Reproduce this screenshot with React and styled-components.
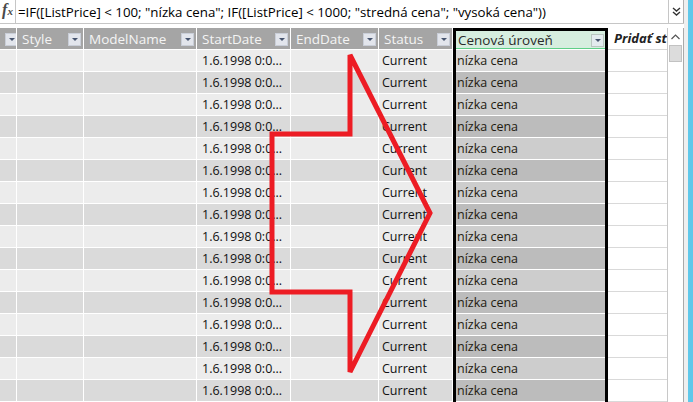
import React from 'react';
import styled, { createGlobalStyle } from 'styled-components';

const GlobalStyle = createGlobalStyle`
  html, body {
    margin: 0;
    padding: 0;
    background: #fff;
    overflow: hidden;
  }
  body {
    font-family: 'Open Sans', 'Noto Sans', sans-serif;
  }
`;

const ROWS = 16;

const columns = [
  { key: 'prev', title: '', width: 17, value: '' },
  { key: 'style', title: 'Style', width: 67, value: '' },
  { key: 'model', title: 'ModelName', width: 113, value: '' },
  { key: 'start', title: 'StartDate', width: 94, value: '1.6.1998 0:0...', pad: 5 },
  { key: 'end', title: 'EndDate', width: 88, value: '' },
  { key: 'status', title: 'Status', width: 74, value: 'Current', pad: 3 },
];

const formula =
  '=IF([ListPrice] < 100; "nízka cena"; IF([ListPrice] < 1000; "stredná cena"; "vysoká cena"))';

const App = () => {
  const rows = Array.from({ length: ROWS }, (_, i) => i);

  return (
    <>
      <GlobalStyle />
      <Page>
        <Main>
          <FormulaBar>
            <FxBox>
              <Fx>f</Fx>
              <FxSub>x</FxSub>
            </FxBox>
            <FormulaText>{formula}</FormulaText>
            <ExpandButton>
              <svg width="9" height="10" viewBox="0 0 9 10">
                <polyline points="1,1 4.5,4 8,1" fill="none" stroke="#333" strokeWidth="1.4" />
                <polyline points="1,5 4.5,8 8,5" fill="none" stroke="#333" strokeWidth="1.4" />
              </svg>
            </ExpandButton>
          </FormulaBar>
          <Gap />
          <Grid>
            {columns.map(col => (
              <Column key={col.key} $width={col.width}>
                <HeaderCell>
                  <HeaderTitle>{col.title}</HeaderTitle>
                  <DropButton />
                </HeaderCell>
                {rows.map(i => (
                  <Cell key={i} $dark={i % 2 === 1} $pad={col.pad}>
                    {col.value}
                  </Cell>
                ))}
              </Column>
            ))}

            <SelectedColumn>
              <SelectedHeader>
                <SelectedTitle>Cenová úroveň</SelectedTitle>
                <DropButton $green />
              </SelectedHeader>
              {rows.map(i => (
                <SelectedCell key={i} $tone={i === 0 ? 'first' : i % 2 === 1 ? 'dark' : 'mid'}>
                  nízka cena
                </SelectedCell>
              ))}
            </SelectedColumn>

            <AddColumn>
              <AddHeader>Pridať st</AddHeader>
              {rows.map(i => (
                <AddCell key={i} />
              ))}
            </AddColumn>

            <ScrollBar>
              <ScrollArrow>
                <svg width="9" height="6" viewBox="0 0 9 6">
                  <polyline points="0.5,5 4.5,1 8.5,5" fill="none" stroke="#555" strokeWidth="1.2" />
                </svg>
              </ScrollArrow>
              <ScrollThumb />
            </ScrollBar>
          </Grid>
        </Main>
        <Edge>
          <EdgeLine />
          <EdgeBlue />
        </Edge>

        <Overlay width="693" height="402" viewBox="0 0 693 402">
          <polygon
            points="350,55 350,134 272,134 272,292 350,292 350,372 430,213"
            fill="none"
            stroke="#ed1c24"
            strokeWidth="5"
            strokeLinejoin="miter"
          />
        </Overlay>
      </Page>
    </>
  );
};

export default App;

const Page = styled.div`
  position: relative;
  display: flex;
  width: 693px;
  height: 402px;
  overflow: hidden;
`;

const Main = styled.div`
  display: flex;
  flex-direction: column;
  width: 684px;
`;

const FormulaBar = styled.div`
  display: flex;
  align-items: center;
  height: 23px;
  border-bottom: 1px solid #c6c6c6;
`;

const FxBox = styled.div`
  display: flex;
  align-items: baseline;
  justify-content: center;
  width: 16px;
  height: 100%;
  padding-top: 1px;
  box-sizing: border-box;
  border-right: 1px solid #c6c6c6;
  color: #4a4a4a;
  font-family: 'Liberation Serif', serif;
  font-style: italic;
  font-weight: bold;
`;

const Fx = styled.span`
  font-size: 16px;
`;

const FxSub = styled.span`
  font-size: 11px;
`;

const FormulaText = styled.div`
  flex: 1;
  padding-left: 2px;
  font-size: 13.3px;
  color: #000;
  white-space: nowrap;
  overflow: hidden;
`;

const ExpandButton = styled.div`
  display: flex;
  align-items: center;
  justify-content: center;
  width: 14px;
  height: 100%;
  border-left: 1px solid #c6c6c6;
  border-right: 1px solid #b0b0b0;
`;

const Gap = styled.div`
  height: 4px;
`;

const Grid = styled.div`
  display: flex;
  flex: 1;
  overflow: hidden;
`;

const Column = styled.div`
  display: flex;
  flex-direction: column;
  width: ${p => p.$width}px;
  flex-shrink: 0;
  box-sizing: border-box;
  border-right: 1px solid #fff;
`;

const HeaderCell = styled.div`
  display: flex;
  align-items: center;
  height: 21px;
  flex-shrink: 0;
  padding: 0 2px 0 5px;
  border-bottom: 1px solid #fff;
  background: #a5a5a5;
  overflow: hidden;
`;

const HeaderTitle = styled.span`
  flex: 1;
  font-size: 13.5px;
  color: #f4f4f4;
  white-space: nowrap;
  overflow: hidden;
`;

const DropButton = styled.span`
  position: relative;
  flex-shrink: 0;
  width: 11px;
  height: 11px;
  margin-top: 1px;
  border: 1px solid ${p => (p.$green ? '#b9c6c0' : '#c9ced8')};
  background: ${p => (p.$green ? '#e3ebee' : '#e2e5ec')};

  &::after {
    content: '';
    position: absolute;
    left: 3px;
    top: 4px;
    border-left: 3px solid transparent;
    border-right: 3px solid transparent;
    border-top: 3px solid #46546e;
  }
`;

const Cell = styled.div`
  height: 21px;
  flex-shrink: 0;
  padding-left: ${p => p.$pad || 4}px;
  border-bottom: 1px solid #fff;
  background: ${p => (p.$dark ? '#dadada' : '#ececec')};
  font-size: 12.5px;
  line-height: 21px;
  color: #111;
  white-space: nowrap;
  overflow: hidden;
`;

const SelectedColumn = styled.div`
  display: flex;
  flex-direction: column;
  width: 155px;
  flex-shrink: 0;
  box-sizing: border-box;
  border: 3px solid #000;
  border-bottom: none;
  background: #fff;
`;

const SelectedHeader = styled.div`
  display: flex;
  align-items: center;
  height: 17px;
  flex-shrink: 0;
  padding: 0 1px 0 2px;
  margin-bottom: 1px;
  border-bottom: 1px solid #5fcf88;
  background: #d6eedf;
`;

const SelectedTitle = styled.span`
  flex: 1;
  font-size: 13.5px;
  color: #2a2a2a;
  white-space: nowrap;
`;

const toneColors = {
  first: '#dadada',
  mid: '#cdcdcd',
  dark: '#bcbcbc',
};

const SelectedCell = styled.div`
  height: 21px;
  flex-shrink: 0;
  padding-left: 1px;
  border-bottom: 1px solid #fff;
  background: ${p => toneColors[p.$tone]};
  font-size: 12.5px;
  line-height: 21px;
  color: #221a10;
  white-space: nowrap;
`;

const AddColumn = styled.div`
  display: flex;
  flex-direction: column;
  width: 60px;
  flex-shrink: 0;
  box-sizing: border-box;
  border-right: 1px solid #c8c8c8;
  background: #fff;
`;

const AddHeader = styled.div`
  height: 21px;
  flex-shrink: 0;
  padding-left: 6px;
  border-bottom: 1px solid #d6d6d6;
  font-size: 13px;
  font-weight: bold;
  font-style: italic;
  line-height: 21px;
  color: #222;
  white-space: nowrap;
  overflow: hidden;
`;

const AddCell = styled.div`
  height: 21px;
  flex-shrink: 0;
  border-bottom: 1px solid #d9d9d9;
`;

const ScrollBar = styled.div`
  display: flex;
  flex-direction: column;
  width: 16px;
  flex-shrink: 0;
  box-sizing: border-box;
  border-right: 1px solid #a9a9a9;
  background: #fff;
`;

const ScrollArrow = styled.div`
  display: flex;
  align-items: center;
  justify-content: center;
  height: 17px;
`;

const ScrollThumb = styled.div`
  height: 15px;
  margin: 0 1px;
  border: 1px solid #c2c2c2;
  background: #dcdcdc;
`;

const Edge = styled.div`
  display: flex;
  flex: 1;
`;

const EdgeLine = styled.div`
  width: 4px;
  background: #efefef;
`;

const EdgeBlue = styled.div`
  flex: 1;
  background: #60c8ea;
`;

const Overlay = styled.svg`
  position: absolute;
  left: 0;
  top: 0;
  pointer-events: none;
`;
